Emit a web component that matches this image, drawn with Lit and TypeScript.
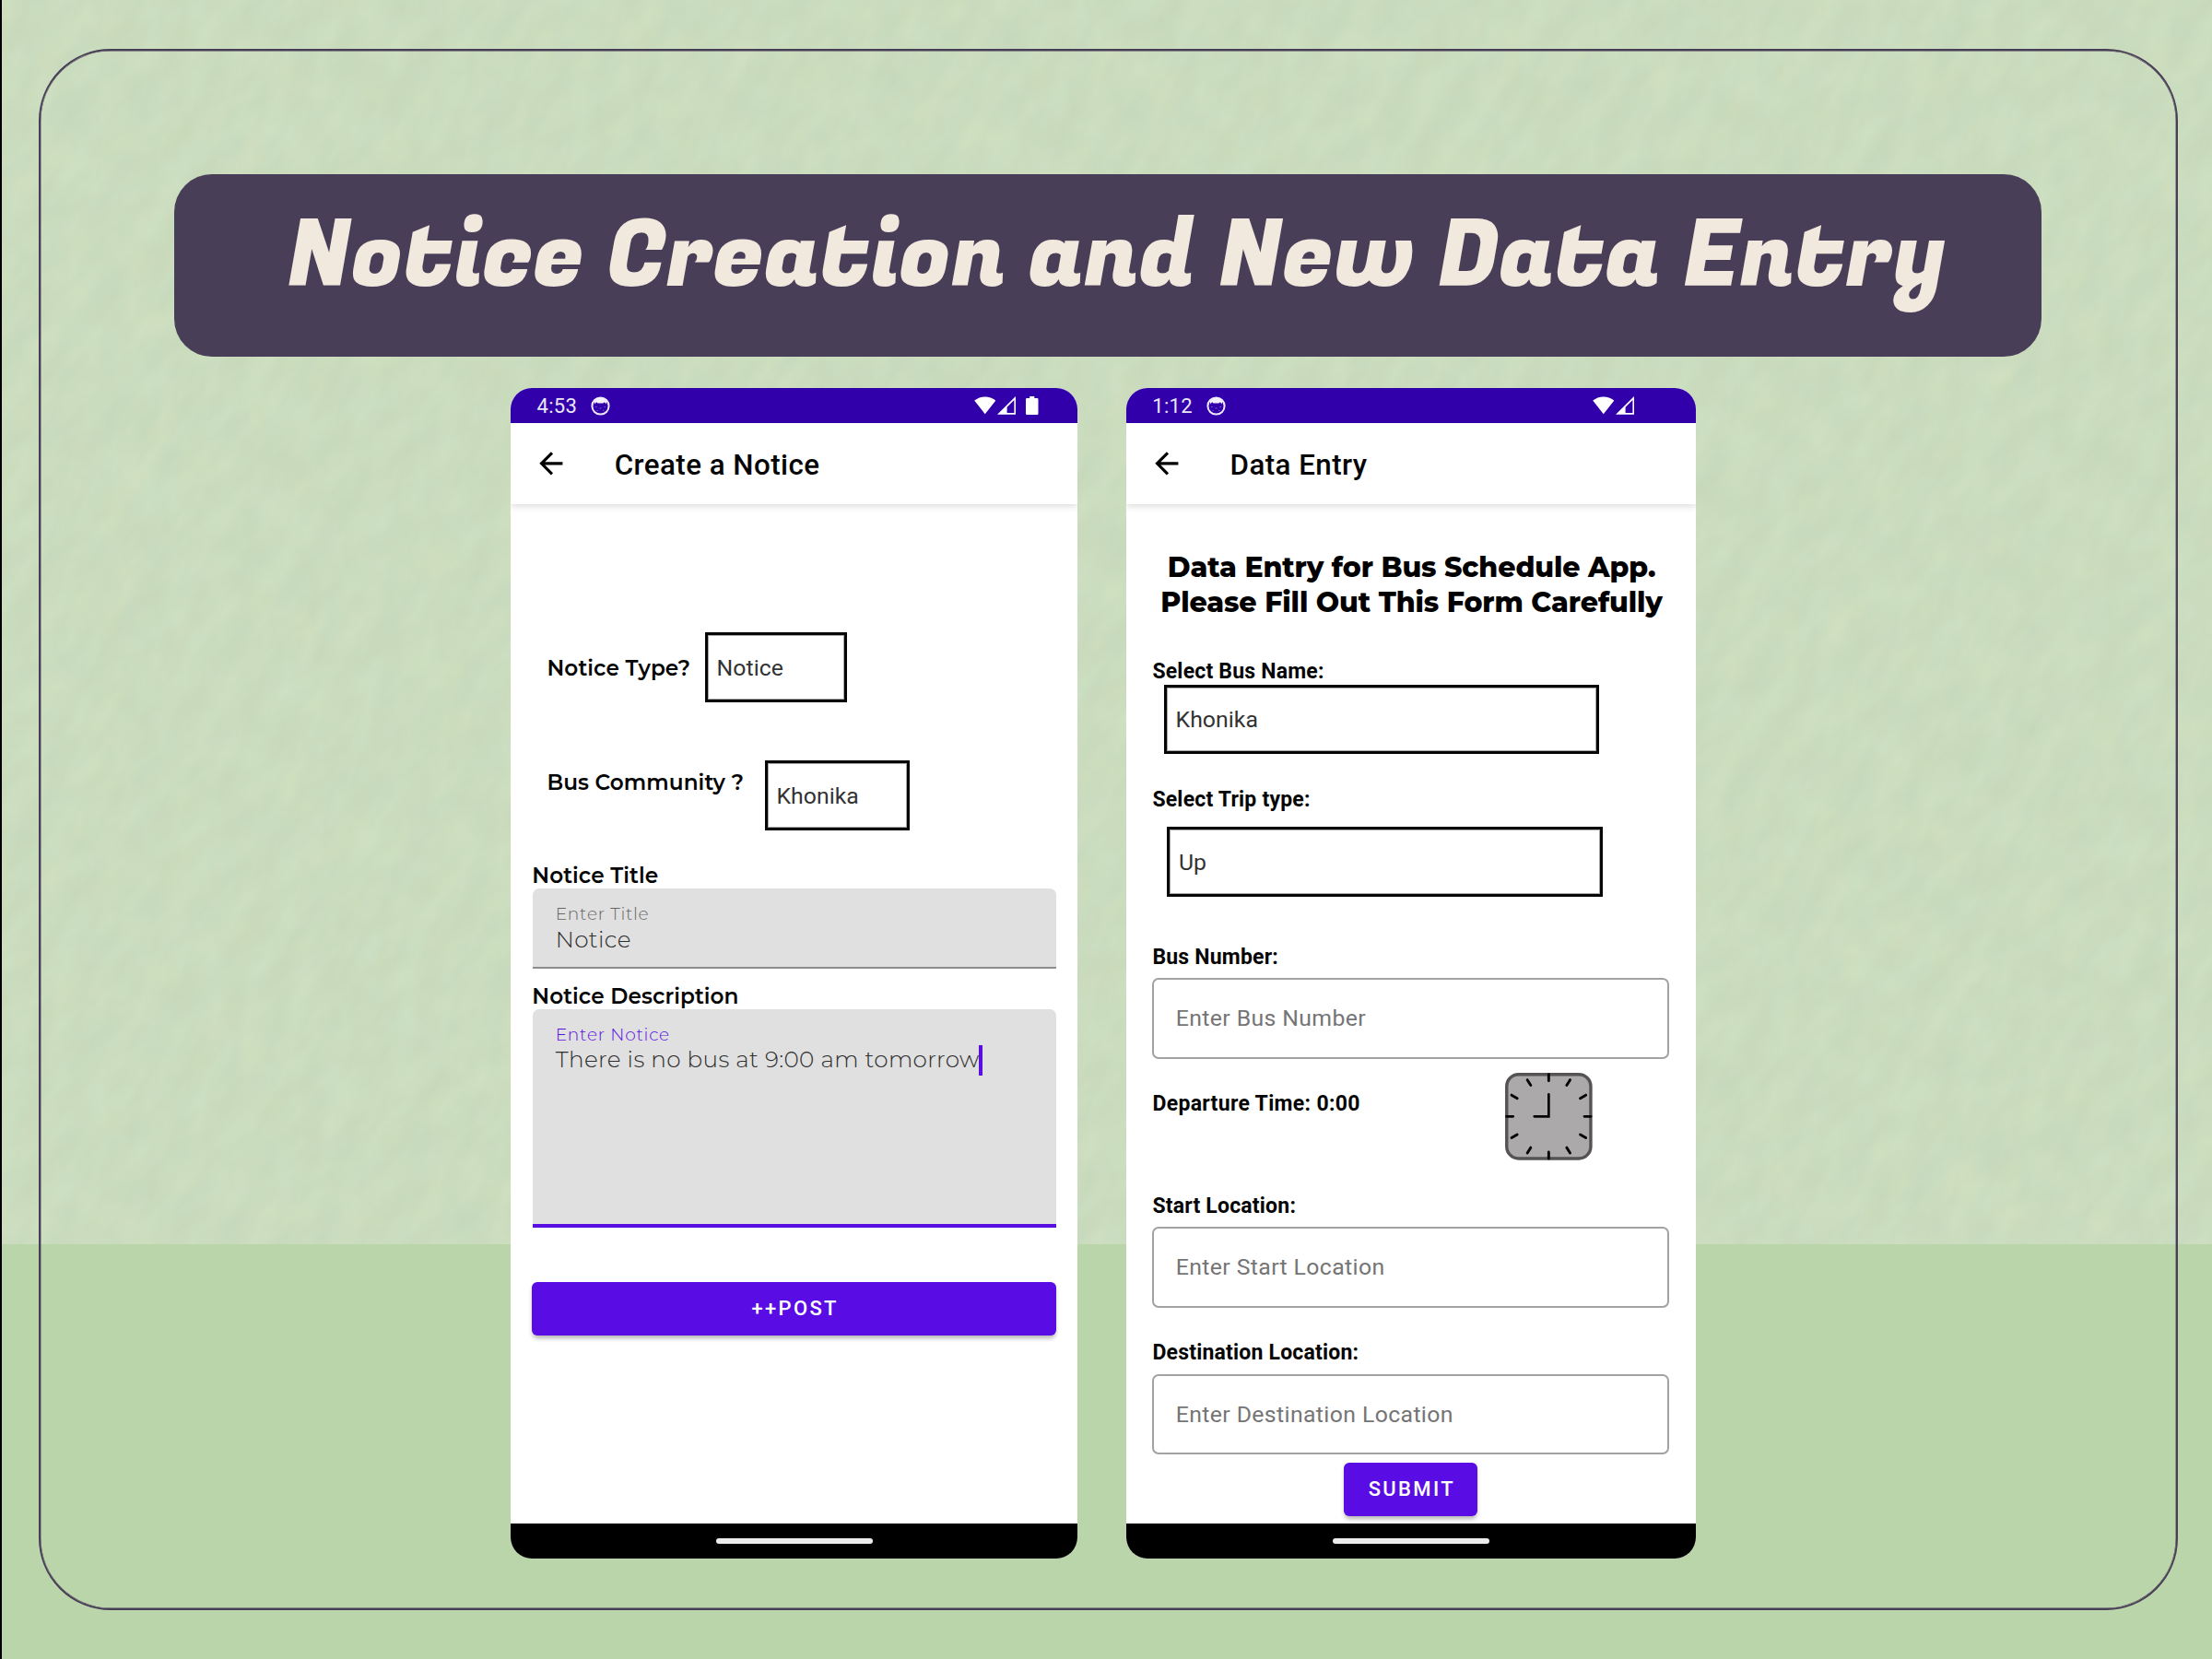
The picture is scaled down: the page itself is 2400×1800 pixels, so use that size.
import { LitElement, html, css, svg, nothing } from "lit";
import { customElement, property } from "lit/decorators.js";

/* Paper-like backdrop with a flat band along the bottom */
@customElement("paper-backdrop")
export class PaperBackdrop extends LitElement {
  static styles = css`
    :host {
      display: block;
      background: #bbd5aa;
      overflow: hidden;
    }
    .paper {
      display: block;
      width: 100%;
      height: 1350px;
    }
  `;
  render() {
    return html`<svg class="paper" viewBox="0 0 2400 1350" preserveAspectRatio="none">
      <defs>
        <filter id="grain" x="0" y="0" width="100%" height="100%" color-interpolation-filters="sRGB">
          <feTurbulence type="fractalNoise" baseFrequency="0.02 0.038" numOctaves="3" seed="11" />
          <feColorMatrix
            type="matrix"
            values="0.035 0.025 0 0 0.764
                    0.04 0 0 0 0.843
                    0.03 0 0.02 0 0.72
                    0 0 0 0 1"
          />
        </filter>
      </defs>
      <rect width="2400" height="1350" fill="#cadcbe" />
      <g transform="rotate(-58 1200 675)">
        <rect x="-300" y="-900" width="3000" height="3150" filter="url(#grain)" />
      </g>
    </svg>`;
  }
}

/* Status bar of a phone */
@customElement("status-bar")
export class StatusBar extends LitElement {
  @property() time = "";
  @property({ type: Boolean }) battery = false;

  static styles = css`
    :host {
      display: flex;
      align-items: center;
      height: 38px;
      box-sizing: border-box;
      padding: 0 42.5px 0 28.5px;
      background: #3200ab;
      color: #ece6f7;
      font: 400 22px/24px Roboto, "Liberation Sans", sans-serif;
    }
    .time {
      width: 58.5px;
      padding-top: 1px;
      letter-spacing: 0.3px;
    }
    .face {
      width: 21px;
      height: 21px;
    }
    .right {
      display: flex;
      align-items: center;
      margin-left: auto;
    }
    .wifi {
      width: 23.5px;
      height: 20px;
      margin-right: 2px;
    }
    .signal {
      width: 20px;
      height: 20px;
      margin-right: 10.6px;
    }
    .battery {
      width: 13.5px;
      height: 20px;
    }
  `;
  render() {
    return html`
      <span class="time">${this.time}</span>
      <svg class="face" viewBox="0 0 21 21">
        <circle cx="10.5" cy="10.5" r="9.1" fill="none" stroke="#eee9fa" stroke-width="2" />
        <path d="M3.6 5.6 C5 3 7.4 1.4 10.5 1.4 C13.6 1.4 16 3 17.4 5.6 L16.6 8.4 L15 6.2 L13.4 7.6 H7.6 L6 6.2 L4.4 8.4 Z" fill="#f4f1fc" />
        <path d="M5 11.5h1.6M14.4 11.5H16M9.5 13h2M6.5 15.5h1.2M13 15.6h1.4" stroke="#7a5bd0" stroke-width="1" />
      </svg>
      <span class="right">
        <svg class="wifi" viewBox="0 0 23.5 20">
          <path d="M0.2 4.6 C3.4 1.9 7.4 0.4 11.75 0.4 C16.1 0.4 20.1 1.9 23.3 4.6 L11.75 19.2 Z" fill="#fff" />
        </svg>
        <svg class="signal" viewBox="0 0 20 20">
          <path d="M0 19.8 L20 0 V19.8 Z M18.4 3.9 L10.6 11.7 V18.1 H18.4 Z" fill="#fff" fill-rule="evenodd" />
        </svg>
        <svg class="battery" viewBox="0 0 13.5 20">
          ${this.battery
            ? svg`<path d="M4.2 0H9.3V2H12.3A1.2 1.2 0 0 1 13.5 3.2V18.8A1.2 1.2 0 0 1 12.3 20H1.2A1.2 1.2 0 0 1 0 18.8V3.2A1.2 1.2 0 0 1 1.2 2H4.2Z" fill="#fff" />`
            : nothing}
        </svg>
      </span>
    `;
  }
}

/* Phone shell: status bar, app bar, slotted screen, gesture bar */
@customElement("phone-shell")
export class PhoneShell extends LitElement {
  @property() time = "";
  @property() heading = "";
  @property({ type: Boolean }) battery = false;

  static styles = css`
    :host {
      display: flex;
      flex-direction: column;
      height: 1270px;
      border-radius: 23px;
      overflow: hidden;
      background: #fff;
    }
    .appbar {
      display: flex;
      align-items: center;
      height: 88px;
      flex: none;
      padding-left: 25px;
      box-shadow: 0 2px 8px rgba(0, 0, 0, 0.15);
    }
    .back {
      width: 37.7px;
      height: 37.7px;
      margin-right: 50px;
    }
    .title {
      padding-top: 3px;
      font: 500 31.3px/40px Roboto, "Liberation Sans", sans-serif;
      letter-spacing: 0.46px;
      color: #050505;
    }
    .screen {
      flex: 1;
      min-height: 0;
      display: flex;
      flex-direction: column;
    }
    .nav {
      display: flex;
      align-items: center;
      justify-content: center;
      flex: none;
      height: 38px;
      background: #000;
    }
    .pill {
      width: 170px;
      height: 6px;
      border-radius: 3px;
      background: #ececec;
    }
  `;
  render() {
    return html`
      <status-bar .time=${this.time} .battery=${this.battery}></status-bar>
      <div class="appbar">
        <svg class="back" viewBox="0 0 24 24">
          <path d="M20 11H7.83l5.59-5.59L12 4l-8 8 8 8 1.41-1.41L7.83 13H20v-2z" fill="#000" />
        </svg>
        <span class="title">${this.heading}</span>
      </div>
      <div class="screen"><slot></slot></div>
      <div class="nav"><span class="pill"></span></div>
    `;
  }
}

const controls = css`
  .select {
    box-sizing: border-box;
    display: flex;
    align-items: center;
    flex: none;
    height: 75.7px;
    padding: 2px 0 0 9.6px;
    border: 3px solid #050505;
    box-shadow: inset 0 0 0 1px rgba(0, 0, 0, 0.35);
    font: 400 24.8px/30px Roboto, "Liberation Sans", sans-serif;
    letter-spacing: 0.04px;
    color: #333;
  }
  .button {
    display: flex;
    align-items: center;
    justify-content: center;
    flex: none;
    height: 58px;
    padding: 0 0 0 2px;
    border: 0;
    border-radius: 6px;
    background: #590ce4;
    box-shadow: 0 4px 5px -1px rgba(0, 0, 0, 0.3);
    color: #fff;
    font: 500 22px/26px Roboto, "Liberation Sans", sans-serif;
    letter-spacing: 2.34px;
  }
`;

/* Screen with the notice form */
@customElement("notice-form")
export class NoticeForm extends LitElement {
  static styles = [
    controls,
    css`
      :host {
        display: flex;
        flex-direction: column;
        font-family: Montserrat, "Open Sans", sans-serif;
      }
      .row {
        display: flex;
        align-items: flex-start;
        padding-left: 39.5px;
      }
      .type {
        margin-top: 139px;
      }
      .community {
        margin-top: 63.5px;
      }
      .label,
      .section {
        font-size: 23.2px;
        font-weight: 600;
        letter-spacing: 0.07px;
        color: #050505;
        white-space: nowrap;
      }
      .label {
        line-height: 30px;
      }
      .type .label {
        width: 171.5px;
        margin-top: 23.5px;
      }
      .type .select {
        width: 154.3px;
      }
      .community .label {
        width: 236.4px;
        margin-top: 8.5px;
      }
      .community .select {
        width: 156.7px;
      }
      .section {
        margin: 35px 0 0 23.3px;
        line-height: 28px;
      }
      .section.next {
        margin-top: 16px;
      }
      .field {
        box-sizing: border-box;
        height: 87.5px;
        margin: 0 23px 0 23.5px;
        padding: 16px 0 0 25.2px;
        border-bottom: 2px solid #8c8c8c;
        border-radius: 7px 7px 0 0;
        background: #e0e0e0;
      }
      .field.active {
        height: 236.5px;
        border-bottom: 4px solid #5a0fe2;
      }
      .hint {
        font-size: 18.6px;
        font-weight: 300;
        line-height: 24px;
        letter-spacing: 0.74px;
        color: #666;
      }
      .active .hint {
        color: #5a0fe2;
      }
      .value {
        display: flex;
        align-items: center;
        font-size: 24.7px;
        font-weight: 300;
        line-height: 30px;
        letter-spacing: 0.36px;
        color: #2e2e2e;
      }
      .active .value {
        line-height: 28.6px;
      }
      .caret {
        width: 4px;
        height: 33px;
        margin: -2px 0 -4px -0.5px;
        background: #5a0fe2;
      }
      .button {
        margin: 58.8px 23px 0 23.3px;
      }
    `,
  ];
  render() {
    return html`
      <div class="row type">
        <span class="label">Notice Type?</span>
        <div class="select">Notice</div>
      </div>
      <div class="row community">
        <span class="label">Bus Community ?</span>
        <div class="select">Khonika</div>
      </div>
      <div class="section">Notice Title</div>
      <div class="field">
        <div class="hint">Enter Title</div>
        <div class="value">Notice</div>
      </div>
      <div class="section next">Notice Description</div>
      <div class="field active">
        <div class="hint">Enter Notice</div>
        <div class="value">There is no bus at 9:00 am tomorrow<span class="caret"></span></div>
      </div>
      <button class="button">++POST</button>
    `;
  }
}

/* Screen with the schedule form */
@customElement("entry-form")
export class EntryForm extends LitElement {
  static styles = [
    controls,
    css`
      :host {
        display: flex;
        flex-direction: column;
        padding: 0 28.6px;
      }
      .intro {
        margin: 49.7px -20px 0 -18.5px;
        text-align: center;
        font: 800 30px/38.6px Montserrat, "Open Sans", sans-serif;
        letter-spacing: -0.1px;
        color: #000;
      }
      .label {
        font: 700 23px/24px Roboto, "Liberation Sans", sans-serif;
        letter-spacing: 0.2px;
        color: #050505;
      }
      .bus {
        margin-top: 42.9px;
      }
      .trip {
        margin-top: 37.3px;
      }
      .number {
        margin-top: 53.8px;
      }
      .start {
        margin-top: 37.7px;
      }
      .destination {
        margin-top: 37.8px;
      }
      .select {
        width: 472.3px;
        margin: 1.8px 0 0 12.6px;
      }
      .select.shifted {
        margin: 17.9px 0 0 15.9px;
      }
      .input {
        box-sizing: border-box;
        display: flex;
        align-items: center;
        height: 87.6px;
        margin-top: 10.4px;
        padding-left: 23.4px;
        border: 2px solid #a2a2a2;
        border-radius: 7px;
        font: 400 24.8px/30px Roboto, "Liberation Sans", sans-serif;
        letter-spacing: 0.38px;
        color: #757575;
      }
      .departure {
        display: flex;
        justify-content: space-between;
        margin-top: 15.4px;
        padding-right: 83.2px;
      }
      .departure .label {
        margin-top: 21.7px;
        letter-spacing: 0.32px;
      }
      .clock {
        width: 94.7px;
        height: 94.7px;
      }
      .button {
        align-self: center;
        box-sizing: border-box;
        width: 145.3px;
        margin-top: 8.4px;
      }
    `,
  ];
  render() {
    return html`
      <div class="intro">Data Entry for Bus Schedule App.<br />Please Fill Out This Form Carefully</div>
      <div class="label bus">Select Bus Name:</div>
      <div class="select">Khonika</div>
      <div class="label trip">Select Trip type:</div>
      <div class="select shifted">Up</div>
      <div class="label number">Bus Number:</div>
      <div class="input">Enter Bus Number</div>
      <div class="departure">
        <span class="label">Departure Time: 0:00</span>
        <svg class="clock" viewBox="-47.35 -47.35 94.7 94.7">
          <rect x="-45.6" y="-45.6" width="91.2" height="91.2" rx="13" fill="#aca9aa" stroke="#555354" stroke-width="3.4" />
          <g stroke="#050505" stroke-width="2.9" stroke-linecap="round">
            <path d="M0 -45.7V-38.7M0 45.7V38.7M-45.7 0H-38.7M45.7 0H38.7" />
            <path d="M-23.2 -39.7L-19.5 -33.8M23.2 -39.7L19.5 -33.8M-23.2 39.7L-19.5 33.8M23.2 39.7L19.5 33.8" />
            <path d="M-40.3 -23.2L-34.2 -19.6M40.3 -23.2L34.2 -19.6M-40.3 23.2L-34.2 19.6M40.3 23.2L34.2 19.6" />
            <path d="M0 -24V0H-15.6" fill="none" stroke-width="2.7" />
          </g>
        </svg>
      </div>
      <div class="label start">Start Location:</div>
      <div class="input">Enter Start Location</div>
      <div class="label destination">Destination Location:</div>
      <div class="input">Enter Destination Location</div>
      <button class="button">SUBMIT</button>
    `;
  }
}

@customElement("app-root")
export class AppRoot extends LitElement {
  static styles = css`
    :host {
      display: block;
      position: relative;
      width: 2400px;
      height: 1800px;
      overflow: hidden;
    }
    .backdrop {
      position: absolute;
      inset: 0;
    }
    .page {
      position: relative;
      box-sizing: border-box;
      height: 1800px;
      padding: 53px 37px 53px 40px;
      border-left: 2px solid #000;
    }
    .frame {
      box-sizing: border-box;
      height: 1694px;
      border: 2px solid #493e57;
      border-radius: 78px;
      box-shadow: inset 0 0 0 0.4px #493e57;
    }
    .banner {
      box-sizing: border-box;
      display: flex;
      width: 2025.5px;
      height: 197.5px;
      margin: 134px 0 0 145px;
      padding: 25px 0 0 122.5px;
      border-radius: 41px;
      background: #493e57;
      color: #f1e8de;
      font: 400 100px/130px "Fugaz One", "Racing Sans One", Roboto, sans-serif;
      white-space: nowrap;
    }
    .phones {
      display: flex;
      gap: 52.8px;
      margin: 34.5px 0 0 510px;
    }
    .notice {
      width: 615px;
    }
    .entry {
      width: 618px;
    }
  `;
  render() {
    return html`
      <paper-backdrop class="backdrop"></paper-backdrop>
      <main class="page">
        <div class="frame">
          <header class="banner">Notice Creation and New Data Entry</header>
          <div class="phones">
            <phone-shell class="notice" time="4:53" heading="Create a Notice" battery>
              <notice-form></notice-form>
            </phone-shell>
            <phone-shell class="entry" time="1:12" heading="Data Entry">
              <entry-form></entry-form>
            </phone-shell>
          </div>
        </div>
      </main>
    `;
  }
}
